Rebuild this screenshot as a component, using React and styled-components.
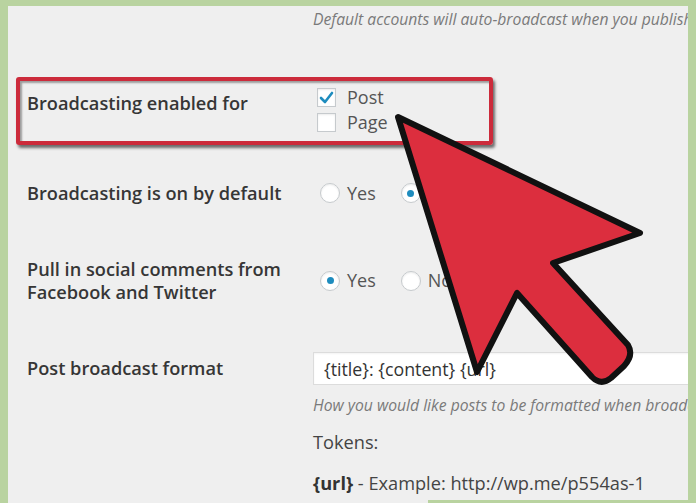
import styled, { createGlobalStyle } from "styled-components";

const Global = createGlobalStyle`
  html, body { margin: 0; padding: 0; }
  body {
    background: #b9d3a0;
    font-family: "Open Sans", "Noto Sans", "Liberation Sans", sans-serif;
  }
`;

const Frame = styled.div`
  position: relative;
  width: 696px;
  height: 503px;
  box-sizing: border-box;
  padding: 6px 8px 0 8px;
  display: flex;
  overflow: hidden;
`;

const Panel = styled.div`
  flex: 1;
  display: flex;
  flex-direction: column;
  background: #efefef;
  padding-left: 19px;
  overflow: hidden;
`;

const Hint = styled.p`
  margin: ${(p) => p.$top || 0}px 0 0 ${(p) => (p.$indent ? 286 : 0)}px;
  font-size: 15.7px;
  line-height: 20px;
  font-style: italic;
  color: #7a7a7a;
  white-space: nowrap;
`;

const Row = styled.div`
  display: grid;
  grid-template-columns: 286px 1fr;
  align-items: center;
  margin-top: ${(p) => p.$top}px;
  min-height: ${(p) => p.$h}px;
`;

const Highlight = styled(Row)`
  box-sizing: border-box;
  width: 477px;
  height: 68px;
  margin-left: -11px;
  padding-left: 7px;
  grid-template-columns: 290px 1fr;
  align-items: start;
  border: 4px solid #cc2b3b;
  border-radius: 3px;
  box-shadow: 2px 3px 3px rgba(0, 0, 0, 0.55), inset 2px 2px 2px rgba(0, 0, 0, 0.35);
`;

const Label = styled.div`
  font-size: 18.2px;
  line-height: 23px;
  font-weight: 600;
  color: #363636;
  padding-top: ${(p) => p.$pad || 0}px;
  white-space: nowrap;
`;

const Checks = styled.div`
  display: flex;
  flex-direction: column;
  gap: 6px;
  padding-top: 7px;
`;

const Option = styled.div`
  display: flex;
  align-items: center;
  font-size: 18px;
  line-height: 19px;
  color: #555;
  margin-right: ${(p) => p.$gap || 0}px;
`;

const Box = styled.span`
  box-sizing: border-box;
  width: 19px;
  height: 19px;
  margin-right: 11px;
  background: #fff;
  border: 1px solid #c6cacd;
  box-shadow: inset 0 1px 2px rgba(0, 0, 0, 0.08);
  display: flex;
  align-items: center;
  justify-content: center;
`;

const Radios = styled.div`
  display: flex;
  align-items: center;
  padding-left: 7px;
`;

const Radio = styled.span`
  box-sizing: border-box;
  width: 20px;
  height: 20px;
  border-radius: 50%;
  margin-right: 7px;
  background: #fff;
  border: 1px solid #c6cacd;
  box-shadow: inset 0 1px 2px rgba(0, 0, 0, 0.08);
  display: flex;
  align-items: center;
  justify-content: center;

  &::after {
    content: "";
    width: 7px;
    height: 7px;
    border-radius: 50%;
    background: ${(p) => (p.$on ? "#1e8cbe" : "transparent")};
  }
`;

const Input = styled.div`
  box-sizing: border-box;
  height: 33px;
  width: 420px;
  padding: 0 10px;
  display: flex;
  align-items: center;
  background: #fff;
  border: 1px solid #dcdcdc;
  box-shadow: inset 0 1px 2px rgba(0, 0, 0, 0.05);
  font-size: 17.8px;
  color: #333;
  white-space: nowrap;
`;

const Text = styled.p`
  margin: ${(p) => p.$top}px 0 0 286px;
  font-size: 18.2px;
  line-height: 24px;
  color: #444;
  white-space: nowrap;

  b { font-weight: 700; color: #333; }
`;

const BottomEdge = styled.div`
  margin-top: auto;
  display: flex;
  justify-content: flex-end;

  &::after {
    content: "";
    width: 260px;
    height: 3px;
    background: #b9d3a0;
  }
`;

const Overlay = styled.svg`
  position: absolute;
  inset: 0;
  pointer-events: none;
`;

function Check() {
  return (
    <svg width="15" height="13" viewBox="0 0 15 13">
      <path d="M2 7 L6 11 L13 2" fill="none" stroke="#1e8cbe" strokeWidth="2.6" strokeLinecap="round" strokeLinejoin="round" />
    </svg>
  );
}

export default function App() {
  return (
    <>
      <Global />
      <Frame>
        <Panel>
          <Hint $indent $top={3}>Default accounts will auto-broadcast when you publish</Hint>

          <Highlight $top={48}>
            <Label $pad={11}>Broadcasting enabled for</Label>
            <Checks>
              <Option><Box><Check /></Box>Post</Option>
              <Option><Box />Page</Option>
            </Checks>
          </Highlight>

          <Row $top={28} $h={40}>
            <Label>Broadcasting is on by default</Label>
            <Radios>
              <Option $gap={25}><Radio />Yes</Option>
              <Option><Radio $on />No</Option>
            </Radios>
          </Row>

          <Row $top={44} $h={47}>
            <Label>Pull in social comments from<br />Facebook and Twitter</Label>
            <Radios>
              <Option $gap={25}><Radio $on />Yes</Option>
              <Option><Radio />No</Option>
            </Radios>
          </Row>

          <Row $top={48} $h={33}>
            <Label>Post broadcast format</Label>
            <Input>{"{title}: {content} {url}"}</Input>
          </Row>

          <Hint $indent $top={10}>How you would like posts to be formatted when broadcasting</Hint>
          <Text $top={15}>Tokens:</Text>
          <Text $top={17}><b>{"{url}"}</b> - Example: http://wp.me/p554as-1</Text>
          <BottomEdge />
        </Panel>

        <Overlay viewBox="0 0 696 503" width="696" height="503">
          <path
            d="M398 117 L640 233 L553 263 L628 345 Q634 355 624 366 L611 378 Q601 386 592 377 L517 293 L477 372 Z"
            fill="#dc2e3e"
            stroke="#111"
            strokeWidth="6"
            strokeLinejoin="round"
          />
        </Overlay>
      </Frame>
    </>
  );
}
